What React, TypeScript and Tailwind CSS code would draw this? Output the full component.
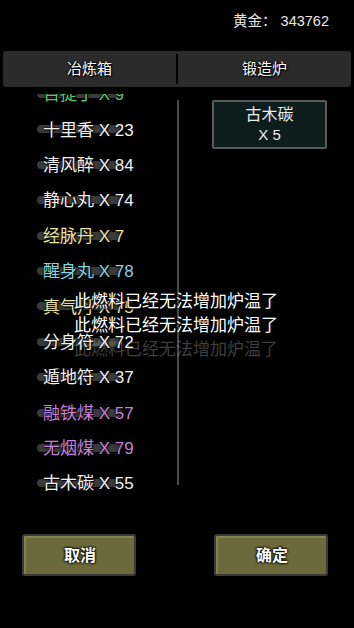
import React from 'react';

type Item = { name: string; count: number; color: string };

const items: Item[] = [
  { name: '百提丁', count: 9, color: 'text-[#5fc46e]' },
  { name: '十里香', count: 23, color: 'text-[#f2f2f2]' },
  { name: '清风醉', count: 84, color: 'text-[#f2f2f2]' },
  { name: '静心丸', count: 74, color: 'text-[#f2f2f2]' },
  { name: '经脉丹', count: 7, color: 'text-[#e9e6a2]' },
  { name: '醒身丸', count: 78, color: 'text-[#88d3e4]' },
  { name: '真气丹', count: 75, color: 'text-[#e9e6a2]' },
  { name: '分身符', count: 72, color: 'text-[#f2f2f2]' },
  { name: '遁地符', count: 37, color: 'text-[#f2f2f2]' },
  { name: '融铁煤', count: 57, color: 'text-[#c980d8]' },
  { name: '无烟煤', count: 79, color: 'text-[#c980d8]' },
  { name: '古木碳', count: 55, color: 'text-[#f2f2f2]' },
];

const outline = '[text-shadow:0_0_2px_#000,0_0_2px_#000,1px_1px_1px_#000]';

const GameButton = ({ label }: { label: string }) => (
  <button className="w-[114px] h-[42px] rounded-[3px] bg-[#3a3a3a] p-[2px]">
    <div className="relative h-full w-full rounded-[1px] bg-[#6c693a] border-t-2 border-l-2 border-[#85814e] flex items-center justify-center">
      <span className="text-[16px] font-bold text-white [text-shadow:0_0_2px_#000,0_0_2px_#000,0_0_3px_#000]">{label}</span>
    </div>
  </button>
);

export default function App() {
  return (
    <div
      className="relative w-[354px] h-[628px] bg-black overflow-hidden"
      style={{ fontFamily: '"Liberation Sans", "Noto Sans CJK SC", sans-serif' }}
    >
      {/* gold */}
      <div className="h-[51px] flex justify-end pr-[25px] pt-[11px]">
        <span className="text-[14.5px] leading-[20px] text-[#e8e8e8]">黄金：&nbsp;343762</span>
      </div>

      {/* tabs */}
      <div className="mx-[3px] h-[36px] rounded-[3px] bg-[#2b2b2b] flex items-center">
        <div className={`flex-1 text-center text-[15px] text-white ${outline}`}>冶炼箱</div>
        <div className="w-[2px] h-[30px] bg-black" />
        <div className={`flex-1 text-center text-[15px] text-white ${outline}`}>锻造炉</div>
      </div>

      {/* main */}
      <div className="h-[447px] flex">
        <div className="w-[177px] h-[413px] mt-[7px] overflow-hidden">
          <div className="mt-[-17px]">
            {items.map((it, i) => (
              <div key={i} className="relative h-[35.4px] flex items-center pl-[43px]">
                <div className="absolute left-[37px] w-[85px] h-[8px] top-[13px] rounded-full bg-[#3a3a3a]" />
                <span className={`relative text-[17px] leading-none whitespace-nowrap ${it.color} ${outline}`}>
                  {it.name} X {it.count}
                </span>
              </div>
            ))}
          </div>
        </div>
        <div className="w-[2px] h-[385px] mt-[13px] bg-[#4a4a4a]" />
        <div className="pl-[33px] pt-[13px]">
          <div className="w-[115px] h-[49px] border-2 border-[#5a5a5a] rounded-[2px] bg-[#0d1d1c] flex flex-col items-center justify-center">
            <span className="text-[16px] leading-[20px] text-[#ececec]">古木碳</span>
            <span className="text-[15px] leading-[19px] text-[#ececec]">X 5</span>
          </div>
        </div>
      </div>

      {/* buttons */}
      <div className="flex justify-between pl-[22px] pr-[26px]">
        <GameButton label="取消" />
        <GameButton label="确定" />
      </div>

      {/* toasts */}
      <div className="absolute left-[74px] top-[290px] flex flex-col">
        <span className={`text-[17px] leading-[24px] text-white ${outline}`}>此燃料已经无法增加炉温了</span>
        <span className={`text-[17px] leading-[24px] text-white ${outline}`}>此燃料已经无法增加炉温了</span>
        <span className="text-[17px] leading-[24px] text-white/25">此燃料已经无法增加炉温了</span>
      </div>
    </div>
  );
}
